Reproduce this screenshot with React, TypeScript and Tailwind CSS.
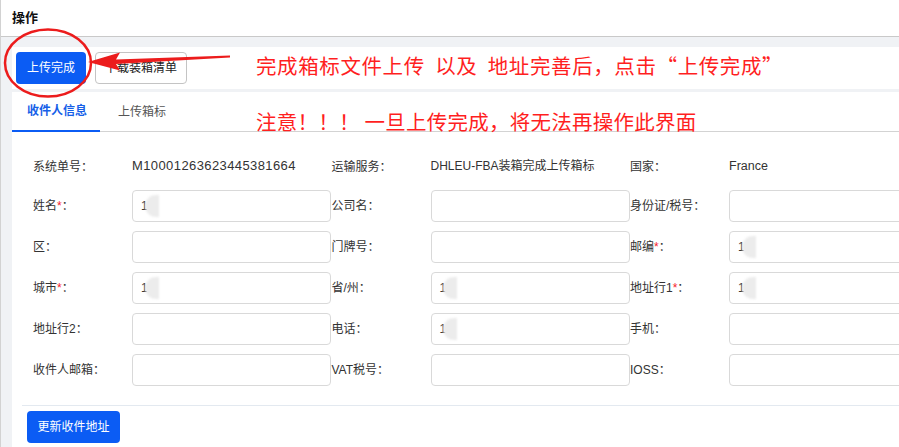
import type { ReactNode } from "react";

const font = "font-['Liberation_Sans','Noto_Sans_CJK_SC',sans-serif]";

type Cell = { label: string; req?: boolean; value?: string };

const rows: Cell[][] = [
  [{ label: "姓名", req: true, value: "1" }, { label: "公司名" }, { label: "身份证/税号" }],
  [{ label: "区" }, { label: "门牌号" }, { label: "邮编", req: true, value: "1" }],
  [{ label: "城市", req: true, value: "1" }, { label: "省/州", value: "1" }, { label: "地址行1", req: true, value: "1" }],
  [{ label: "地址行2" }, { label: "电话", value: "1" }, { label: "手机" }],
  [{ label: "收件人邮箱" }, { label: "VAT税号" }, { label: "IOSS" }],
];

const Label = ({ children, req }: { children: ReactNode; req?: boolean }) => (
  <div className="w-[99px] shrink-0 text-[12px] text-[#333]">
    {children}
    {req && <span className="text-[#f5222d]">*</span>}：
  </div>
);

const Field = ({ value }: { value?: string }) => (
  <div className="w-[199px] h-[32px] shrink-0 rounded-[4px] border border-[#d9d9d9] bg-white flex items-center pl-[8px] text-[12px] text-[#333]">
    {value && (
      <>
        <span>{value}</span>
        <span className="-ml-[3px] w-[14px] h-[22px] rounded-l-full bg-[#ececec] blur-[1px]" />
      </>
    )}
  </div>
);

export default function App() {
  return (
    <div className={`relative w-[899px] h-[447px] overflow-hidden bg-[#f0f2f5] border-l border-[#d2d2d2] ${font}`}>
      <div className="h-[37px] bg-white border-b border-[#c9c9c9] flex items-center pl-[11px] text-[13px] font-bold text-[#111]">
        操作
      </div>

      <div className="pl-[11px] pt-[10px]">
        <div className="h-[42px] bg-white flex items-center gap-[9px] pl-[4px]">
          <button className="h-[32px] w-[70px] rounded-[4px] bg-[#0b5cf4] text-white text-[12px]">上传完成</button>
          <button className="h-[32px] w-[92px] rounded-[4px] border border-[#c4c4c4] bg-white text-[#222] text-[12px]">下载装箱清单</button>
        </div>

        <div className="mt-[3px] bg-white">
          <div className="h-[40px] border-b border-[#d3d3d3] flex items-stretch">
            <div className="w-[88px] -mb-px border-b-2 border-[#0b5cf4] flex items-center pl-[15px] text-[12px] font-bold text-[#1660e8]">
              收件人信息
            </div>
            <div className="flex items-center pl-[18px] text-[12px] text-[#555]">上传箱标</div>
          </div>

          <div className="pl-[10px]">
            <div className="pl-[11px] pt-[21px] flex flex-col gap-[9px]">
              <div className="h-[28px] flex items-center">
                <div className="w-[298.5px] flex items-center shrink-0">
                  <Label>系统单号</Label>
                  <span className="text-[13px] text-[#333] tracking-[0.4px] -mt-[2px]">M10001263623445381664</span>
                </div>
                <div className="w-[298.5px] flex items-center shrink-0">
                  <Label>运输服务</Label>
                  <span className="text-[12px] text-[#333] -mt-[2px]">DHLEU-FBA装箱完成上传箱标</span>
                </div>
                <div className="w-[298.5px] flex items-center shrink-0">
                  <Label>国家</Label>
                  <span className="text-[12.5px] text-[#333] -mt-[2px]">France</span>
                </div>
              </div>
              {rows.map((row, i) => (
                <div key={i} className="h-[32px] flex items-center">
                  {row.map((c) => (
                    <div key={c.label} className="w-[298.5px] flex items-center shrink-0">
                      <Label req={c.req}>{c.label}</Label>
                      <Field value={c.value} />
                    </div>
                  ))}
                </div>
              ))}
            </div>

            <div className="mt-[19px] border-t border-[#e3e9f0] pt-[5px] pl-[5px] pb-[10px]">
              <button className="h-[32px] w-[93px] rounded-[4px] bg-[#0b5cf4] text-white text-[12px]">更新收件地址</button>
            </div>
          </div>
        </div>
      </div>

      {/* annotations drawn over the screenshot */}
      <svg className="absolute left-0 top-0 pointer-events-none" width="899" height="447">
        <ellipse cx="47" cy="63" rx="43" ry="33.5" fill="none" stroke="#ec1c1c" strokeWidth="2.5" />
        <path d="M87 62 L119 52.5 L115 59.5 L229 55.5 L229 57.5 L115 64 L119 70.5 Z" fill="#ec1c1c" />
      </svg>
      <div className="absolute left-[255px] top-[53px] text-[20.5px] leading-[24px] tracking-[0.6px] text-[#ff1f1f] whitespace-pre font-['Noto_Sans_CJK_SC',sans-serif]">
        完成箱标文件上传  以及  地址完善后，点击“上传完成”
      </div>
      <div className="absolute left-[255px] top-[109px] text-[20.5px] leading-[24px] tracking-[0.25px] text-[#ff1f1f] whitespace-pre font-['Noto_Sans_CJK_SC',sans-serif]">
        注意！！！ 一旦上传完成，将无法再操作此界面
      </div>
    </div>
  );
}
